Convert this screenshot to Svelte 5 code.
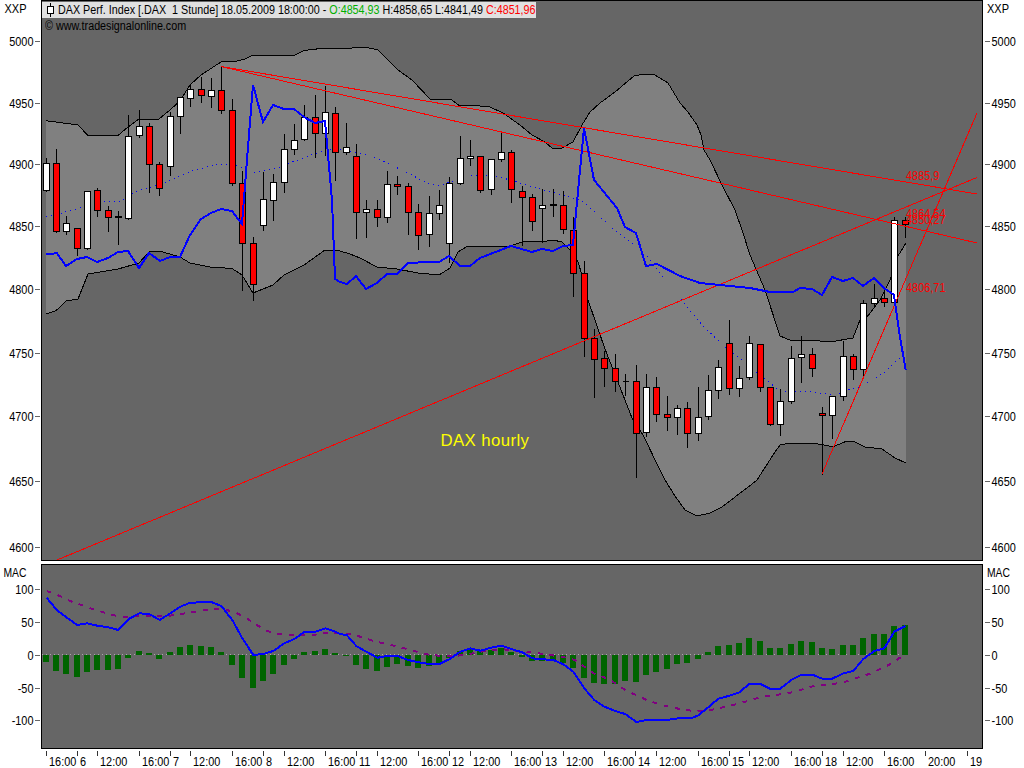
<script lang="ts">
	type Point = [number, number];

	// traced at 3x, so every series is [x, y] / 3 from a pane origin
	const traced = (ox: number, oy: number, pts: number[][]): Point[] =>
		pts.map(([x, y]) => [ox + x / 3, oy + y / 3]);
	const line = (pts: Point[]) => pts.map(([x, y]) => `${x.toFixed(1)},${y.toFixed(1)}`).join(' ');

	// x, high, body top, body bottom, low, colour
	const candles: [number, number, number, number, number, string][] = [
		[46.7, 157, 163.5, 190.5, 191, 'w'], [56.3, 148, 163.5, 231.5, 232, 'r'], [66.3, 215, 223.5, 231.5, 234.7, 'w'],
		[77.3, 227, 228, 248.5, 255, 'r'], [87.3, 190, 191, 248.5, 249, 'w'], [97.3, 187, 190.5, 210.5, 216, 'r'],
		[108.3, 205.7, 210, 217.7, 231, 'r'], [118.3, 210, 216, 217, 244, 'k'], [128.3, 114, 136, 218.7, 219, 'w'],
		[139.3, 109, 126, 135.7, 137, 'w'], [149.3, 122, 126, 164.7, 192, 'r'], [159.7, 161, 164.3, 188.7, 195, 'r'],
		[170.3, 111, 116.3, 166.7, 175, 'w'], [180.3, 97, 97.3, 116.3, 133, 'w'], [190.3, 84, 89.3, 98.3, 106, 'w'],
		[201.3, 76, 89.3, 95.7, 102, 'r'], [211.3, 77, 90.3, 96.7, 107, 'w'], [221.3, 66, 90.3, 110.3, 113, 'r'],
		[232.3, 98, 110.3, 183.7, 185, 'r'], [242.3, 170, 183.3, 243.7, 290.7, 'r'], [253.3, 236, 243.3, 284.7, 300, 'r'],
		[263.3, 171, 199.3, 225.7, 230.7, 'w'], [273.3, 173, 182, 200.3, 220, 'w'], [284.3, 133, 149.3, 182.3, 192.7, 'w'],
		[294.3, 123, 140.3, 149.3, 154, 'w'], [304.3, 104, 117, 139.3, 140, 'w'], [315.3, 94, 117.3, 133.7, 157, 'r'],
		[325.3, 85, 112.3, 133.7, 155, 'w'], [335.3, 106, 113.7, 152.7, 180, 'r'], [346.3, 122, 147.3, 152.7, 154, 'w'],
		[356.3, 143, 156.3, 212.3, 238.7, 'r'], [366.3, 199, 209.3, 212.3, 237.3, 'w'], [377.3, 199, 209.3, 217.7, 226.7, 'r'],
		[387.3, 170, 184.3, 217.7, 222.7, 'w'], [397.3, 175, 184.3, 186.3, 194.7, 'r'], [408.3, 182, 186.3, 212.3, 234, 'r'],
		[418.3, 203, 212.3, 235.7, 249.7, 'r'], [429.3, 195, 213.3, 234.3, 246.7, 'w'], [439.3, 189, 205.3, 213.3, 219.3, 'w'],
		[449.3, 176, 183.3, 243.3, 262.7, 'w'], [460.3, 135, 158.3, 183.3, 184, 'w'], [470.3, 139, 156.3, 158.3, 165.7, 'w'],
		[480.3, 156, 156.3, 190.3, 192.7, 'r'], [491.3, 159, 159.3, 189.3, 194, 'w'], [501.3, 132, 152.3, 159.3, 161.7, 'w'],
		[511.3, 149, 152.3, 189.3, 202.7, 'r'], [522.3, 185, 191.3, 197.3, 245, 'r'], [532.3, 193, 197.3, 221.3, 230.7, 'r'],
		[542.3, 188, 205.3, 208.3, 242.7, 'w'], [553.3, 188, 204.3, 205.3, 216.7, 'k'], [563.3, 190, 205.3, 229.3, 233, 'r'],
		[573.3, 216.7, 230, 273.3, 296.7, 'r'], [584.3, 260, 273.3, 338.3, 356, 'r'], [594.3, 328, 338.3, 359.3, 397.7, 'r'],
		[604.3, 350, 358.3, 368.3, 386.7, 'r'], [615.3, 353.3, 368.3, 381.7, 391.7, 'r'], [625.3, 373.3, 381.3, 381.3, 395, 't'],
		[636.3, 364, 381.3, 433.3, 477.7, 'r'], [646.3, 373.3, 387.3, 432.3, 436.7, 'w'], [656.3, 376, 387.3, 414.3, 421.7, 'r'],
		[667.3, 395, 414.3, 417.3, 430, 'r'], [677.3, 404.3, 408.3, 417.3, 434.7, 'w'], [687.3, 401.3, 408.3, 433.3, 447.7, 'r'],
		[698.3, 386, 417.3, 433.3, 440.7, 'w'], [708.3, 374, 390.3, 416.3, 419, 'w'], [718.3, 359.3, 367.3, 390.3, 398.7, 'w'],
		[729.3, 319, 343.3, 388.3, 394, 'r'], [739.3, 365, 378.3, 388.3, 396, 'w'], [749.3, 335.3, 343.3, 377.7, 379, 'w'],
		[760.3, 344, 344.3, 387.3, 391.7, 'r'], [770.3, 387, 387.3, 424.3, 425, 'r'], [780.3, 388.3, 401.3, 424.3, 435.7, 'w'],
		[791.3, 345, 358.3, 401.3, 403.7, 'w'], [801.3, 335, 354.3, 357.3, 382.7, 'w'], [812.3, 347.3, 354.3, 368.3, 376.7, 'r'],
		[822.3, 406, 413.3, 415.7, 474, 'r'], [832.3, 396, 396.3, 415.7, 438.3, 'w'], [843.3, 340, 356.3, 396.3, 400.7, 'w'],
		[853.3, 353.3, 356.3, 369.3, 379, 'r'], [863.3, 299, 303.3, 369.3, 375.7, 'w'], [874.3, 283.3, 298.3, 303.7, 305.7, 'w'],
		[884.3, 290, 298.3, 302.3, 306.7, 'r'], [894.3, 216, 220.7, 302.3, 303, 'w'], [905.7, 216, 220.7, 224.3, 237.3, 'r']
	];

	const upperBand: Point[] = [
		[46, 120.7], [78, 125], [88, 135.5], [118, 135.5], [128, 127], [139, 119], [159, 119], [170, 110], [180, 101],
		[190, 85], [201, 75], [221, 62], [235, 61.5], [245, 59], [253, 55], [280, 56], [295, 55], [304, 50.5], [325, 48],
		[340, 49], [365, 47], [378, 50], [398, 70], [412, 80], [430, 99], [451, 99.5], [460, 106], [470, 105], [490, 107],
		[503, 113], [520, 125], [532, 135], [545, 142], [553, 149], [562, 148], [573, 142], [582, 125], [590, 112],
		[600, 103], [615, 92], [634, 76], [645, 74], [655, 75], [668, 83], [680, 103], [688, 112], [697, 125], [701, 135],
		[704, 150], [710, 160], [722, 185], [735, 210], [742, 230], [750, 255], [765, 290], [780, 336], [792, 341],
		[810, 340], [830, 342], [853, 338], [860, 320], [867, 317], [880, 300], [890, 280], [898, 256], [906, 243]
	];

	const lowerBand: Point[] = [
		[46, 314], [56, 310.7], [66, 301], [78, 299], [88, 274], [118, 269], [139, 263], [149, 252], [159, 251], [170, 254],
		[180, 257], [190, 263], [210, 267], [232, 268.5], [242, 275], [253, 293], [273, 285], [284, 275], [304, 265],
		[325, 250], [340, 251], [350, 254], [360, 258], [377, 267], [397, 269], [418, 273], [439, 275], [450, 268],
		[458, 252], [466, 247], [510, 246], [525, 241], [542, 242], [553, 240], [562, 242], [570, 250], [578, 262],
		[582, 275], [588, 300], [605, 349], [632, 418], [643, 435], [660, 470], [665, 480], [675, 496], [685, 510],
		[697, 516], [710, 513], [722, 507], [735, 497], [747, 488], [757, 480], [775, 452], [780, 445], [790, 443],
		[813, 443], [833, 446.7], [847, 441], [855, 442], [865, 447], [882, 449], [895, 458], [906, 463]
	];

	const midBand: Point[] = [
		[46, 216.7], [63, 212.7], [80, 208], [103, 201.7], [120, 201.7], [133, 192.7], [167, 181.7], [190, 171.7],
		[213, 165], [233, 164], [253, 173.3], [277, 168.3], [293, 161.7], [325, 150], [340, 149], [365, 154], [387, 163],
		[408, 173], [425, 182], [438, 186], [457, 180], [470, 175], [487, 175], [503, 178], [520, 183], [540, 189],
		[577, 199], [585, 203], [603, 220], [623, 237], [640, 248], [670, 285], [679, 297], [692, 313], [705, 328],
		[723, 345], [745, 363], [765, 379], [780, 391], [813, 392], [835, 395], [848, 390], [860, 387], [885, 372],
		[895, 362], [903, 356]
	];

	const priceLine: Point[] = [
		[46, 254], [57, 253.3], [66, 266], [77, 259], [87, 257], [97, 262], [108, 258], [118, 252], [128, 251], [139, 268],
		[149, 253], [160, 261], [170, 257], [180, 257], [190, 235], [201, 219], [211, 213], [221, 209], [232, 211],
		[242, 224], [248, 147], [253, 85], [263, 122], [273, 105], [284, 109], [294, 109], [304, 117], [315, 123],
		[325, 121], [332, 200], [335, 279], [340, 282], [347, 284], [356, 276], [366, 289], [377, 283], [387, 274],
		[397, 274], [408, 263], [429, 262], [439, 262], [449, 256], [460, 266], [470, 266], [480, 258], [511, 246],
		[532, 252], [542, 249], [553, 251], [563, 246], [573, 245], [580, 170], [584, 128], [594, 180], [617, 208],
		[625, 227], [636, 233], [643, 256], [646, 266], [657, 264], [680, 276], [700, 283], [730, 286], [750, 288],
		[770, 292], [793, 292], [800, 288], [812, 289], [822, 295], [832, 277], [843, 281], [853, 278], [863, 286],
		[874, 278], [884, 288], [894, 295], [900, 337], [905.7, 370]
	];

	const trendLines = [
		[221, 66.5, 977, 194],
		[221, 66.5, 977, 243],
		[57, 560, 977, 177.5],
		[822, 474, 977, 113]
	];

	const levels: [string, number, number][] = [
		['4885,9', 906, 180], ['4864,54', 906, 218], ['4850,27', 906, 224], ['4806,71', 906, 292]
	];

	// histogram end, crop y inside the macd pane (zero sits at 284)
	const histogram = [
		305, 333, 342, 351, 336, 330, 330, 327, 293, 273, 279, 297, 276, 261, 255, 258, 261, 276, 315, 354, 384, 363, 342,
		315, 297, 276, 273, 267, 279, 288, 315, 327, 333, 321, 312, 318, 324, 318, 312, 294, 273, 264, 273, 270, 264, 276,
		291, 303, 303, 303, 309, 324, 354, 369, 372, 372, 363, 366, 345, 336, 327, 312, 309, 297, 276, 258, 255, 249, 234,
		243, 264, 264, 252, 243, 246, 264, 267, 255, 255, 234, 222, 222, 198, 195
	];

	const macd: Point[] = [
		...traced(0, 560, [[140, 113], [170, 150], [199, 172], [232, 195], [262, 190], [292, 197], [325, 202], [355, 210], [385, 178], [418, 160], [448, 162], [479, 180], [511, 160], [541, 140], [571, 128], [604, 127], [634, 126], [664, 138], [697, 180], [727, 235], [760, 285], [790, 282], [820, 273], [853, 250], [883, 237], [913, 216], [946, 215], [976, 205], [1006, 215]]),
		...traced(340, 560, [[0, 222], [20, 225], [49, 258], [79, 275], [112, 293], [142, 288], [172, 288], [205, 300], [235, 307], [268, 312], [298, 312], [328, 298], [361, 275], [391, 265], [421, 272], [454, 263], [484, 257], [514, 267], [547, 277], [577, 295], [607, 298], [640, 300], [670, 313], [700, 335], [733, 385], [763, 420], [793, 440], [826, 453], [856, 462], [889, 486], [919, 480], [980, 480]]),
		...traced(680, 560, [[0, 474], [35, 474], [55, 466], [85, 442], [115, 416], [145, 408], [178, 397], [208, 372], [241, 372], [270, 386], [301, 386], [334, 360], [364, 344], [397, 344], [427, 356], [457, 356], [490, 340], [520, 333], [550, 297], [583, 273], [613, 265], [643, 215], [676, 198]])
	];

	const signal: Point[] = [
		...traced(0, 560, [[140, 93], [175, 106], [208, 122], [245, 135], [280, 148], [315, 158], [350, 168], [385, 171], [420, 168], [460, 168], [495, 168], [530, 165], [565, 158], [600, 153], [635, 148], [670, 147], [705, 157], [740, 175], [770, 195], [800, 212], [830, 222], [870, 225], [905, 225], [945, 224], [980, 219]]),
		...traced(340, 560, [[0, 220], [30, 223], [65, 231], [100, 243], [135, 251], [170, 259], [205, 268], [240, 278], [270, 285], [310, 288], [345, 288], [380, 284], [420, 275], [460, 270], [490, 268], [520, 272], [560, 276], [595, 280], [630, 285], [665, 290], [705, 300], [760, 340], [800, 355], [830, 372], [855, 390], [888, 405], [920, 420], [955, 432], [990, 441]]),
		...traced(680, 560, [[0, 447], [40, 453], [80, 452], [110, 446], [145, 438], [180, 430], [215, 419], [250, 410], [288, 405], [322, 400], [355, 392], [392, 380], [430, 376], [460, 372], [497, 365], [535, 352], [568, 342], [600, 327], [630, 313], [660, 293], [676, 286]])
	];

	const priceTicks: [string, number][] = [
		['5000', 41], ['4950', 103], ['4900', 164], ['4850', 226], ['4800', 289], ['4750', 353], ['4700', 416], ['4650', 481], ['4600', 547]
	];
	const macdTicks: [string, number][] = [['100', 589], ['50', 622], ['0', 655], ['-50', 688], ['-100', 720]];

	const timeTicks: [string, number][] = [
		['16:00', 46], ['6', 77], ['12:00', 97], ['16:00', 139], ['7', 170], ['12:00', 190], ['16:00', 232], ['8', 263],
		['12:00', 284], ['16:00', 325], ['11', 356], ['12:00', 377], ['16:00', 418], ['12', 449], ['12:00', 470],
		['16:00', 511], ['13', 542], ['12:00', 563], ['16:00', 604], ['14', 635], ['12:00', 656], ['16:00', 698],
		['15', 729], ['12:00', 749], ['16:00', 791], ['18', 822], ['12:00', 843], ['16:00', 884], ['20:00', 925], ['19', 967]
	];

	const px = (v: number) => Math.floor(v) + 0.5;
	const bandArea = line([...upperBand, ...[...lowerBand].reverse()]);
</script>

<div class="chart">
	<div class="pane price">
		<svg class="axis" viewBox="0 0 41 561" width="41" height="561">
			<text class="unit" x="4.5" y="13" textLength="22" lengthAdjust="spacingAndGlyphs">XXP</text>
			{#each priceTicks as [label, y]}
				<line class="tick" x1="35" x2="40" y1={y + 0.5} y2={y + 0.5} />
				<text transform="translate(33.5 {y + 5}) scale(.84 1)" text-anchor="end">{label}</text>
			{/each}
		</svg>

		<div class="plot">
			<svg viewBox="42 1 940 559" width="940" height="559">
				<polygon class="band" points={bandArea} />
				<polyline class="edge" points={line(upperBand)} />
				<polyline class="edge" points={line(lowerBand)} />
				<polyline class="mid" points={line(midBand)} />

				{#each candles as [x, high, top, bottom, low, colour]}
					<line class="wick" x1={px(x)} x2={px(x)} y1={px(high)} y2={px(low)} />
					{#if colour === 't'}
						<line class="wick" x1={px(x) - 3} x2={px(x) + 3} y1={px(top)} y2={px(top)} />
					{:else}
						<rect
							class="body {colour}"
							x={Math.floor(x) - 2.5}
							y={px(top)}
							width="6"
							height={Math.max(px(bottom) - px(top), 1)}
						/>
					{/if}
				{/each}

				{#each trendLines as [x1, y1, x2, y2]}
					<line class="trend" {x1} {y1} {x2} {y2} />
				{/each}

				<polyline class="close" points={line(priceLine)} />

				{#each levels as [label, x, y]}
					<text class="level" transform="translate({x} {y}) scale(.84 1)">{label}</text>
				{/each}
				<text class="note" x="440.5" y="446">DAX hourly</text>
			</svg>

			<div class="legend">
				<svg width="9" height="14" viewBox="0 0 9 14" aria-hidden="true">
					<path d="M4.5 0V14" stroke="#000" />
					<rect x="1.5" y="3.5" width="6" height="7" fill="#fff" stroke="#000" />
				</svg>
				<span>DAX Perf. Index [.DAX  1 Stunde] 18.05.2009 18:00:00 - <b class="open">O:4854,93</b> H:4858,65 L:4841,49 <b class="last">C:4851,96</b></span>
			</div>
			<div class="source">© www.tradesignalonline.com</div>
		</div>

		<svg class="axis" viewBox="983 0 41 561" width="41" height="561">
			<text class="unit" x="987" y="13" textLength="22" lengthAdjust="spacingAndGlyphs">XXP</text>
			{#each priceTicks as [label, y]}
				<line class="tick" x1="985" x2="990" y1={y + 0.5} y2={y + 0.5} />
				<text transform="translate(991.5 {y + 5}) scale(.84 1)">{label}</text>
			{/each}
		</svg>
	</div>

	<div class="pane oscillator">
		<svg class="axis" viewBox="0 564 41 185" width="41" height="185">
			<text class="unit" x="3.5" y="577" textLength="23" lengthAdjust="spacingAndGlyphs">MAC</text>
			{#each macdTicks as [label, y]}
				<line class="tick" x1="35" x2="40" y1={y + 0.5} y2={y + 0.5} />
				<text transform="translate(33.5 {y + 5}) scale(.84 1)" text-anchor="end">{label}</text>
			{/each}
		</svg>

		<div class="plot">
			<svg viewBox="42 565 940 183" width="940" height="183">
				<line class="zero" x1="42" x2="906" y1="654.5" y2="654.5" />
				{#each histogram as end, i}
					{@const y = 560 + end / 3}
					<rect
						class="bar"
						x={Math.floor(candles[i][0]) - 3}
						y={Math.min(y, 654.7)}
						width="6"
						height={Math.abs(y - 654.7)}
					/>
				{/each}
				<polyline class="signal" points={line(signal)} />
				<polyline class="macd" points={line(macd)} />
			</svg>
		</div>

		<svg class="axis" viewBox="983 564 41 185" width="41" height="185">
			<text class="unit" x="987" y="577" textLength="23" lengthAdjust="spacingAndGlyphs">MAC</text>
			{#each macdTicks as [label, y]}
				<line class="tick" x1="985" x2="990" y1={y + 0.5} y2={y + 0.5} />
				<text transform="translate(991.5 {y + 5}) scale(.84 1)">{label}</text>
			{/each}
		</svg>
	</div>

	<svg class="axis time" viewBox="0 749 1024 19" width="1024" height="19">
		{#each timeTicks as [label, x]}
			<line class="tick dark" x1={x + 0.5} x2={x + 0.5} y1="751" y2="756" />
			<text transform="translate({x + 3} 765.5) scale(.84 1)">{label}</text>
		{/each}
	</svg>
</div>

<style>
	:global(body) {
		background: #fff;
	}

	.chart {
		display: flex;
		flex-direction: column;
		width: 1024px;
		height: 768px;
		overflow: hidden;
		font-family: 'Liberation Sans', Arial, sans-serif;
	}

	.pane {
		display: grid;
		grid-template-columns: 41px 942px 41px;
	}

	.oscillator {
		margin-top: 3px;
	}

	.plot {
		position: relative;
		border: 1px solid #000;
		background: #666;
	}

	svg {
		display: block;
		flex: none;
		shape-rendering: crispEdges;
	}

	text {
		font-size: 13px;
		fill: #000;
	}

	.tick {
		stroke: #666;
	}

	.tick.dark {
		stroke: #333;
	}

	.band {
		fill: #808080;
	}

	.edge {
		fill: none;
		stroke: #000;
	}

	.mid {
		fill: none;
		stroke: #00f;
		stroke-dasharray: 1 4;
	}

	.wick {
		stroke: #000;
	}

	.body {
		stroke: #000;
	}

	.body.w {
		fill: #fff;
	}

	.body.r {
		fill: #f00;
	}

	.body.k {
		fill: #000;
	}

	.trend {
		stroke: #f00;
	}

	.close,
	.macd {
		fill: none;
		stroke: #00f;
		stroke-width: 2;
	}

	.level {
		fill: #f00;
	}

	.note {
		fill: #ff0;
		font-size: 16.8px;
		letter-spacing: 0.4px;
	}

	.zero {
		stroke: #aaa;
		stroke-dasharray: 1 3;
	}

	.bar {
		fill: #006400;
	}

	.signal {
		fill: none;
		stroke: #800080;
		stroke-width: 2;
		stroke-dasharray: 5 6.5;
	}

	.legend {
		position: absolute;
		top: 1px;
		left: 0;
		display: flex;
		align-items: center;
		gap: 3px;
		height: 16px;
		width: 494px;
		padding-left: 4px;
		box-sizing: border-box;
		overflow: hidden;
		background: #e0e0e0;
		font-size: 12.5px;
		line-height: 16px;
		white-space: pre;
		color: #000;
	}

	.legend span {
		display: inline-block;
		flex: none;
		transform: scaleX(0.86);
		transform-origin: left;
	}

	.legend b {
		font-weight: normal;
	}

	.open {
		color: #00b000;
	}

	.last {
		color: #f00;
	}

	.source {
		position: absolute;
		top: 18px;
		left: 3px;
		font-size: 12.5px;
		line-height: 14px;
		color: #000;
		transform: scaleX(0.86);
		transform-origin: left;
	}
</style>
